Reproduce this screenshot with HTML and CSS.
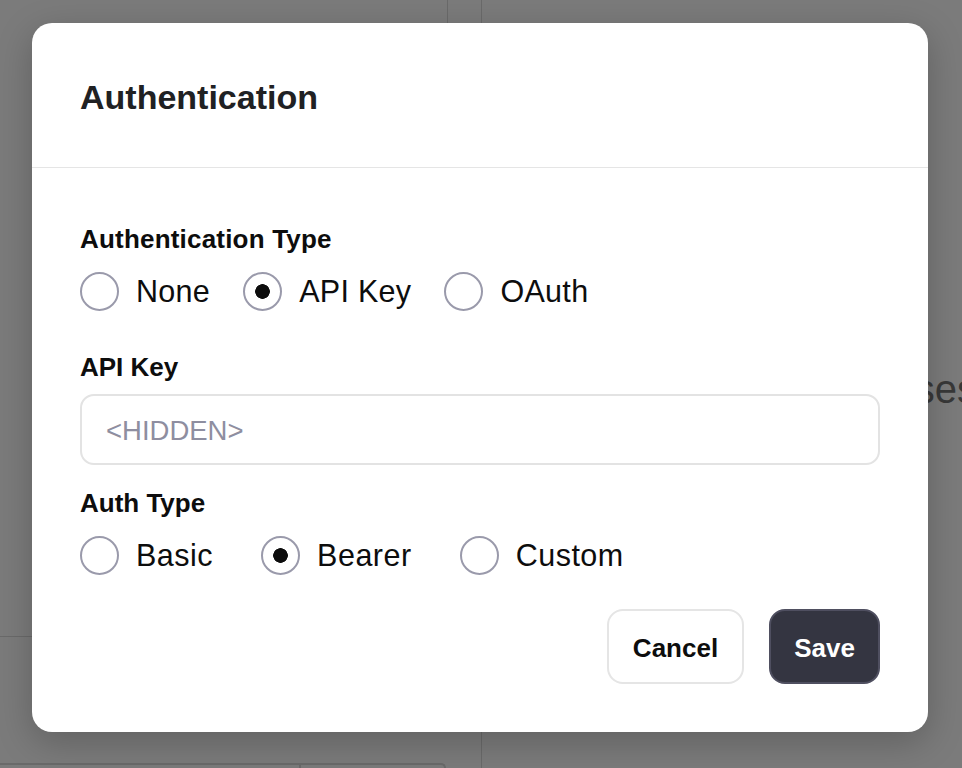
FILE: index.html
```html
<!DOCTYPE html>
<html lang="en">
<head>
<meta charset="utf-8">
<title>Authentication</title>
<link rel="stylesheet" href="styles.css">
</head>
<body>
<div class="page">
  <aside class="left">
    <div class="left-top"></div>
    <div class="left-gap"></div>
    <div class="left-bottom"><div class="left-bottom-cell"></div></div>
  </aside>
  <main class="right">
    <p class="bg-text">Responses</p>
  </main>
</div>

<div class="modal" role="dialog" aria-labelledby="dlg-title">
  <header class="modal-header">
    <h2 id="dlg-title" class="modal-title">Authentication</h2>
  </header>
  <div class="modal-body">
    <div class="field-label">Authentication Type</div>
    <div class="radio-row row-a">
      <label class="radio"><input type="radio" name="auth"><span>None</span></label>
      <label class="radio"><input type="radio" name="auth" checked><span>API Key</span></label>
      <label class="radio"><input type="radio" name="auth"><span>OAuth</span></label>
    </div>

    <div class="field-label label-key">API Key</div>
    <input class="text-input" type="text" placeholder="&lt;HIDDEN&gt;">

    <div class="field-label label-type">Auth Type</div>
    <div class="radio-row row-b">
      <label class="radio"><input type="radio" name="type"><span>Basic</span></label>
      <label class="radio"><input type="radio" name="type" checked><span>Bearer</span></label>
      <label class="radio"><input type="radio" name="type"><span>Custom</span></label>
    </div>

    <div class="modal-footer">
      <button class="btn btn-secondary" type="button">Cancel</button>
      <button class="btn btn-primary" type="button">Save</button>
    </div>
  </div>
</div>
</body>
</html>
```

FILE: styles.css
```css
* { box-sizing: border-box; }

html, body {
  margin: 0;
  padding: 0;
}

body {
  width: 962px;
  height: 768px;
  overflow: hidden;
  position: relative;
  background: #7b7b7b;
  font-family: "Liberation Sans", Arial, sans-serif;
  color: #0d0d0d;
}

/* background page (dimmed) */
.page {
  display: grid;
  grid-template-columns: 482px 1fr;
  height: 768px;
}

.left {
  border-right: 1px solid #6a6a6a;
  display: flex;
  flex-direction: column;
}

.left-top {
  width: 448px;
  height: 637px;
  border-right: 1px solid #6a6a6a;
  border-bottom: 1px solid #6a6a6a;
}

.left-gap {
  height: 126px;
}

.left-bottom {
  width: 446px;
  flex: 1;
  border-top: 2px solid #6a6a6a;
  border-right: 2px solid #6a6a6a;
  border-top-right-radius: 12px;
  display: flex;
}

.left-bottom-cell {
  width: 301px;
  border-right: 2px solid #6a6a6a;
}

.right {
  padding-left: 295px;
  overflow: hidden;
}

.bg-text {
  margin: 366px 0 0;
  font-size: 40px;
  line-height: 46px;
  color: #383838;
  white-space: nowrap;
}

/* modal */
.modal {
  position: absolute;
  left: 32px;
  top: 23px;
  width: 896px;
  background: #fff;
  border-radius: 20px;
  box-shadow: 0 10px 36px rgba(0, 0, 0, 0.22);
}

.modal-header {
  height: 145px;
  padding: 3px 48px 0;
  display: flex;
  align-items: center;
  border-bottom: 1px solid #e5e5e5;
}

.modal-title {
  margin: 0;
  font-size: 34px;
  line-height: 40px;
  font-weight: 700;
  letter-spacing: 0;
  color: #202123;
}

.modal-body {
  padding: 55px 48px 48px;
  display: flex;
  flex-direction: column;
}

.field-label {
  font-size: 26px;
  line-height: 32px;
  font-weight: 700;
  color: #0d0d0d;
}

.field-label:first-child { letter-spacing: 0.2px; }

.label-key { margin-top: 40px; }
.label-type { margin-top: 22px; }

.radio-row {
  display: flex;
  align-items: center;
  margin-top: 17px;
}

.row-a { gap: 33px; }
.row-b { gap: 48px; margin-top: 17px; }

.radio {
  display: flex;
  align-items: center;
  gap: 17px;
  font-size: 30.5px;
  line-height: 39px;
  letter-spacing: 0.5px;
  color: #0d0d0d;
}

.row-a .radio { letter-spacing: 0.3px; }

.radio input {
  appearance: none;
  -webkit-appearance: none;
  margin: 0;
  width: 39px;
  height: 39px;
  border: 2px solid #9a9aab;
  border-radius: 50%;
  background: #fff;
}

.radio input:checked {
  background: radial-gradient(circle, #0d0d0d 0 7px, #fff 7.6px);
}

.text-input {
  margin-top: 11px;
  width: 100%;
  height: 71px;
  border: 2px solid #e3e3e3;
  border-radius: 14px;
  padding: 3px 24px 0;
  font-family: "Liberation Sans", Arial, sans-serif;
  font-size: 27.5px;
  color: #0d0d0d;
  background: #fff;
  outline: none;
}

.text-input::placeholder {
  color: #8e8ea0;
}

.modal-footer {
  margin-top: 34px;
  display: flex;
  justify-content: flex-end;
  gap: 25px;
}

.btn {
  height: 75px;
  border-radius: 16px;
  font-family: "Liberation Sans", Arial, sans-serif;
  font-size: 26px;
  font-weight: 700;
}

.btn-secondary {
  width: 137px;
  padding: 3px 0 0;
  background: #fff;
  border: 2px solid #e5e5e5;
  color: #0d0d0d;
}

.btn-primary {
  width: 111px;
  padding: 3px 0 0;
  background: #343541;
  border: 2px solid #4f4f60;
  color: #fff;
}
```
